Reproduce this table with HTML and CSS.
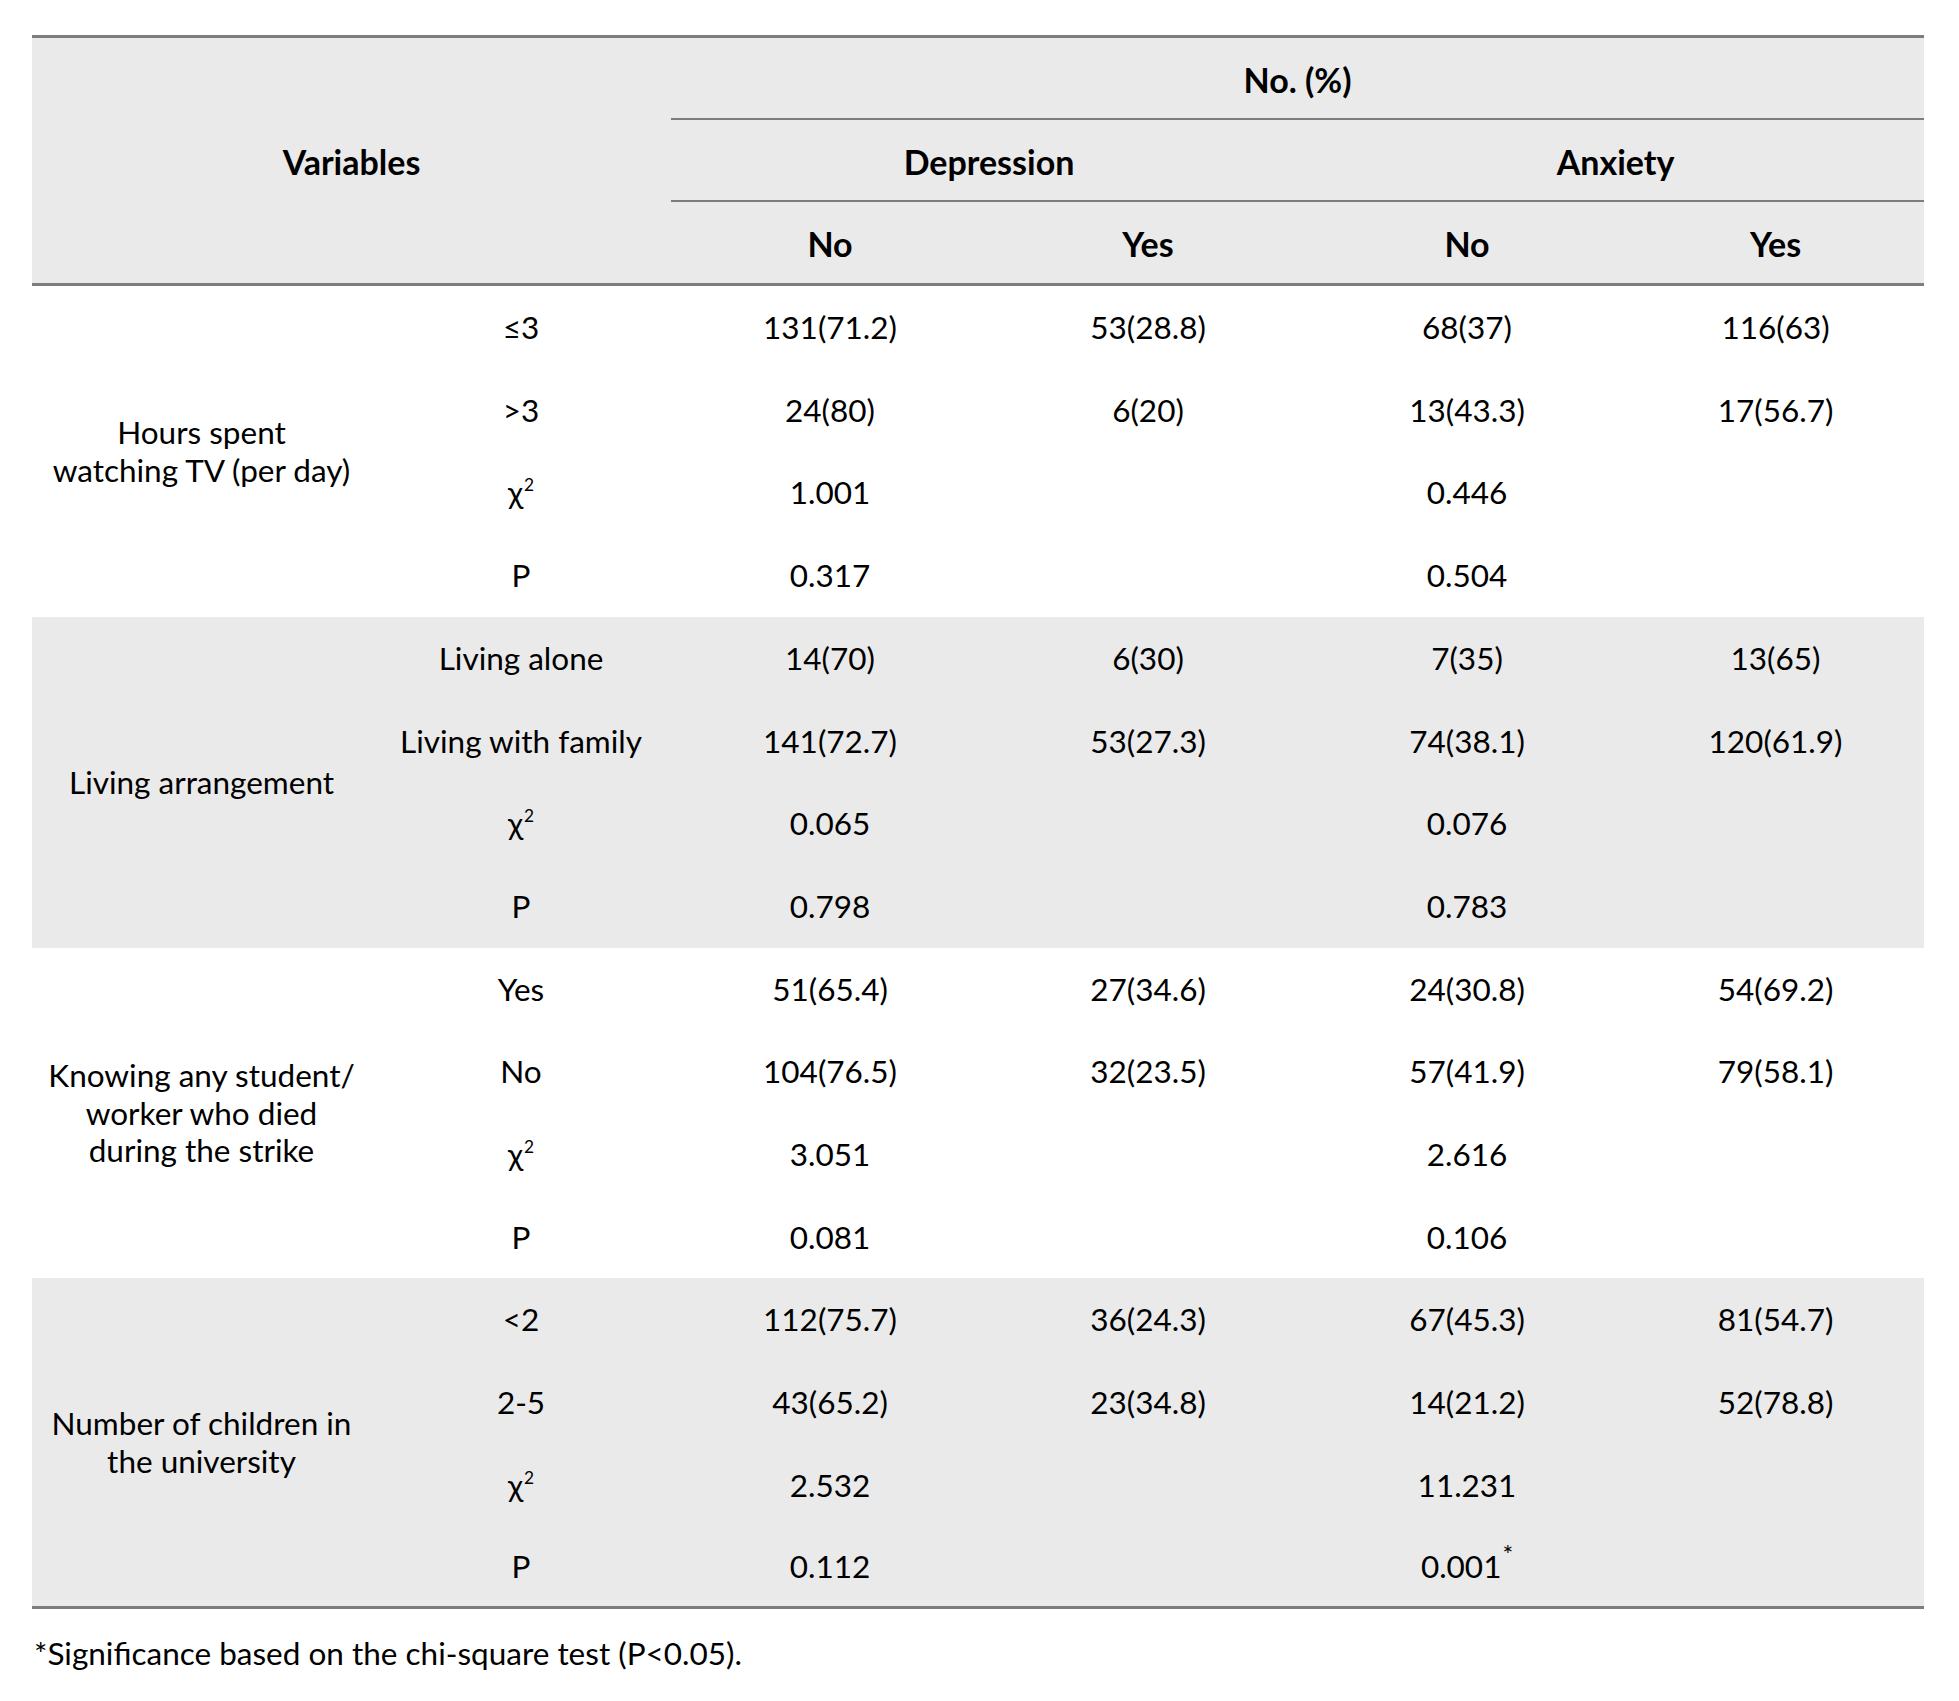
FILE: index.html
```html
<!DOCTYPE html>
<html lang="en">
<head>
<meta charset="utf-8">
<title>Table</title>
<link rel="stylesheet" href="styles.css">
</head>
<body>
<div class="page">
<table class="data">
  <colgroup>
    <col class="c-group">
    <col class="c-sub">
    <col class="c-d-no">
    <col class="c-d-yes">
    <col class="c-a-no">
    <col class="c-a-yes">
  </colgroup>
  <thead>
    <tr class="h1">
      <th class="var top bottom" rowspan="3" colspan="2">Variables</th>
      <th class="top rule" colspan="4">No. (%)</th>
    </tr>
    <tr class="h2">
      <th class="rule" colspan="2">Depression</th>
      <th class="rule" colspan="2">Anxiety</th>
    </tr>
    <tr class="h3">
      <th class="bottom">No</th>
      <th class="bottom">Yes</th>
      <th class="bottom">No</th>
      <th class="bottom">Yes</th>
    </tr>
  </thead>
  <tbody class="grp">
    <tr><td class="label" rowspan="4">Hours spent<br>watching TV (per day)</td><td>≤3</td><td>131(71.2)</td><td>53(28.8)</td><td>68(37)</td><td>116(63)</td></tr>
    <tr><td>&gt;3</td><td>24(80)</td><td>6(20)</td><td>13(43.3)</td><td>17(56.7)</td></tr>
    <tr><td>χ<sup>2</sup></td><td>1.001</td><td></td><td>0.446</td><td></td></tr>
    <tr><td>P</td><td>0.317</td><td></td><td>0.504</td><td></td></tr>
  </tbody>
  <tbody class="grp shaded">
    <tr><td class="label" rowspan="4">Living arrangement</td><td>Living alone</td><td>14(70)</td><td>6(30)</td><td>7(35)</td><td>13(65)</td></tr>
    <tr><td>Living with family</td><td>141(72.7)</td><td>53(27.3)</td><td>74(38.1)</td><td>120(61.9)</td></tr>
    <tr><td>χ<sup>2</sup></td><td>0.065</td><td></td><td>0.076</td><td></td></tr>
    <tr><td>P</td><td>0.798</td><td></td><td>0.783</td><td></td></tr>
  </tbody>
  <tbody class="grp">
    <tr><td class="label" rowspan="4">Knowing any student/<br>worker who died<br>during the strike</td><td>Yes</td><td>51(65.4)</td><td>27(34.6)</td><td>24(30.8)</td><td>54(69.2)</td></tr>
    <tr><td>No</td><td>104(76.5)</td><td>32(23.5)</td><td>57(41.9)</td><td>79(58.1)</td></tr>
    <tr><td>χ<sup>2</sup></td><td>3.051</td><td></td><td>2.616</td><td></td></tr>
    <tr><td>P</td><td>0.081</td><td></td><td>0.106</td><td></td></tr>
  </tbody>
  <tbody class="grp shaded last">
    <tr><td class="label" rowspan="4">Number of children in<br>the university</td><td>&lt;2</td><td>112(75.7)</td><td>36(24.3)</td><td>67(45.3)</td><td>81(54.7)</td></tr>
    <tr><td>2-5</td><td>43(65.2)</td><td>23(34.8)</td><td>14(21.2)</td><td>52(78.8)</td></tr>
    <tr><td>χ<sup>2</sup></td><td>2.532</td><td></td><td>11.231</td><td></td></tr>
    <tr><td>P</td><td>0.112</td><td></td><td>0.001<sup class="star">*</sup></td><td></td></tr>
  </tbody>
</table>
<p class="note">*Significance based on the chi-square test (P&lt;0.05).</p>
</div>
</body>
</html>
```

FILE: styles.css
```css
html, body {
  margin: 0;
  padding: 0;
  background: #ffffff;
}

.page {
  padding: 35px 0 0 32px;
  font-family: "Lato", "Liberation Sans", sans-serif;
  font-size: 31.5px;
  color: #000;
}

.data {
  border-collapse: separate;
  border-spacing: 0;
  table-layout: fixed;
  width: 1892px;
}

.c-group { width: 339px; }
.c-sub { width: 300px; }
.c-d-no { width: 318px; }
.c-d-yes { width: 318px; }
.c-a-no { width: 320px; }
.c-a-yes { width: 297px; }

.data th,
.data td {
  padding: 0;
  text-align: center;
  vertical-align: middle;
  line-height: 37.5px;
  white-space: nowrap;
}

.data thead th {
  background: #eaeaea;
  font-weight: 700;
  font-size: 34px;
  padding-top: 3px;
}

.h1 { height: 85px; }
.h2 { height: 82px; }
.h3 { height: 84px; }

.top { border-top: 3px solid #7d7d7d; }
.bottom { border-bottom: 3px solid #7d7d7d; }
.rule { border-bottom: 2px solid #7d7d7d; }

.grp tr { height: 82.7px; }

.grp td { padding-top: 1px; }

.shaded td { background: #eaeaea; }

.last tr:last-child td,
.last td.label {
  border-bottom: 3px solid #7d7d7d;
}

.data sup {
  font-size: 55%;
  line-height: 0;
  vertical-align: 0.75em;
  margin-left: 1px;
}

.data sup.star {
  font-size: 80%;
  vertical-align: 0.55em;
}

.note {
  margin: 26px 0 0 2px;
  line-height: 37.5px;
}
```
